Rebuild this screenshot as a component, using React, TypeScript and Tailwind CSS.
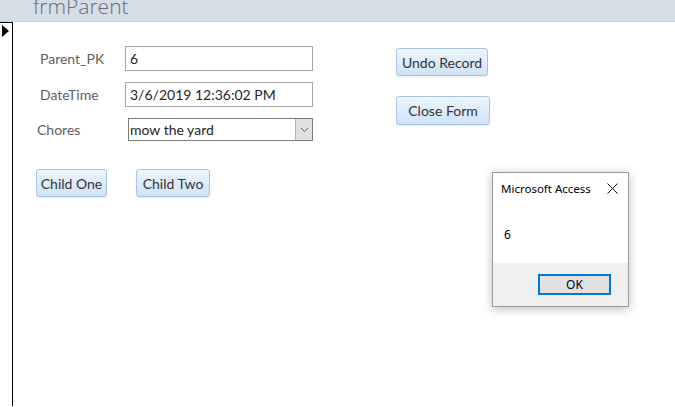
import React from 'react';

// Access-style form with a modal message box over it
const accessFont = { fontFamily: 'Lato, "Open Sans", sans-serif' };

const FieldLabel = ({ text, className = '' }: { text: string; className?: string }) => (
  <div className={`text-[14px] text-[#606060] ${className}`}>{text}</div>
);

const AccessButton = ({ label, className = '' }: { label: string; className?: string }) => (
  <button
    type="button"
    className={`h-[28px] rounded-[3px] border border-[#a6c5e6] bg-gradient-to-b from-[#eef5fd] to-[#cfe3f8] px-[3px] text-[14px] text-[#333] shadow-[0_1px_1px_rgba(0,0,0,0.08)] ${className}`}
  >
    {label}
  </button>
);

const App: React.FC = () => {
  return (
    <div className="relative h-[407px] w-[675px] overflow-hidden bg-white" style={accessFont}>
      {/* title bar */}
      <div className="h-[22px] overflow-hidden border-b border-[#c9d3df] bg-[#d6dde6]">
        <div
          className="-mt-[4px] pl-[33px] text-[21px] leading-[21px] text-[#5f6d7c]"
          style={{ fontFamily: '"Open Sans", "Noto Sans", sans-serif', fontWeight: 300 }}
        >
          frmParent
        </div>
      </div>

      <div className="flex h-[385px]">
        {/* record selector */}
        <div className="h-[384px] w-[13px] border-t border-r border-black">
          <svg width="8" height="12" viewBox="0 0 8 12" className="ml-[2px] mt-[2px]">
            <polygon points="0,0 7,6 0,12" fill="#000" />
          </svg>
        </div>

        {/* form body */}
        <div className="flex">
          <div className="w-[340px] pt-[24px]">
            <div className="flex items-center">
              <FieldLabel text="Parent_PK" className="w-[85px] pl-[27px]" />
              <div className="ml-[27px] flex h-[25px] w-[188px] items-center border border-[#a5a5a5] px-[4px] text-[14px] text-[#262626]">
                6
              </div>
            </div>
            <div className="mt-[11px] flex items-center">
              <FieldLabel text="DateTime" className="w-[85px] pl-[27px]" />
              <div className="ml-[27px] flex h-[25px] w-[188px] items-center border border-[#a5a5a5] px-[4px] text-[14px] text-[#262626]">
                3/6/2019 12:36:02 PM
              </div>
            </div>
            <div className="mt-[11px] flex items-center">
              <FieldLabel text="Chores" className="w-[85px] pl-[24px]" />
              <div className="ml-[30px] flex h-[23px] w-[185px] items-center border border-[#7a7a7a] pl-[1px] text-[14px] text-[#262626]">
                <span className="flex-1">mow the yard</span>
                <span className="flex h-[21px] w-[17px] items-center justify-center border-l border-[#b5b5b5] bg-[#e1e1e1]">
                  <svg width="9" height="6" viewBox="0 0 9 6">
                    <polyline points="1,1 4.5,4.5 8,1" fill="none" stroke="#5a5a5a" strokeWidth="1" />
                  </svg>
                </span>
              </div>
            </div>
            <div className="mt-[28px] flex gap-[29px] pl-[23px]">
              <AccessButton label="Child One" className="w-[71px]" />
              <AccessButton label="Child Two" className="w-[74px]" />
            </div>
          </div>

          <div className="flex flex-col items-start gap-[20px] pl-[43px] pt-[26px]">
            <AccessButton label="Undo Record" className="w-[92px]" />
            <AccessButton label="Close Form" className="h-[29px] w-[94px]" />
          </div>
        </div>
      </div>

      {/* message box */}
      <div
        className="absolute left-[492px] top-[172px] flex h-[135px] w-[137px] flex-col border border-[#9a9a9a] bg-white shadow-[0_2px_10px_rgba(0,0,0,0.25)]"
        style={{ fontFamily: '"Noto Sans", "Open Sans", sans-serif' }}
      >
        <div className="flex h-[31px] items-center justify-between pl-[8px] pr-[10px] text-[11.5px] text-black">
          <span>Microsoft Access</span>
          <svg width="11" height="11" viewBox="0 0 11 11">
            <path d="M0.5 0.5 L10.5 10.5 M10.5 0.5 L0.5 10.5" stroke="#111" strokeWidth="1" />
          </svg>
        </div>
        <div className="flex-1 pl-[11px] pt-[22px] text-[12px] text-black">6</div>
        <div className="flex h-[43px] items-center justify-end bg-[#f0f0f0] pr-[17px]">
          <div className="flex h-[21px] w-[73px] items-center justify-center border-2 border-[#0078d7] bg-[#e1e1e1] text-[12px] text-black">
            OK
          </div>
        </div>
      </div>
    </div>
  );
};

export default App;
